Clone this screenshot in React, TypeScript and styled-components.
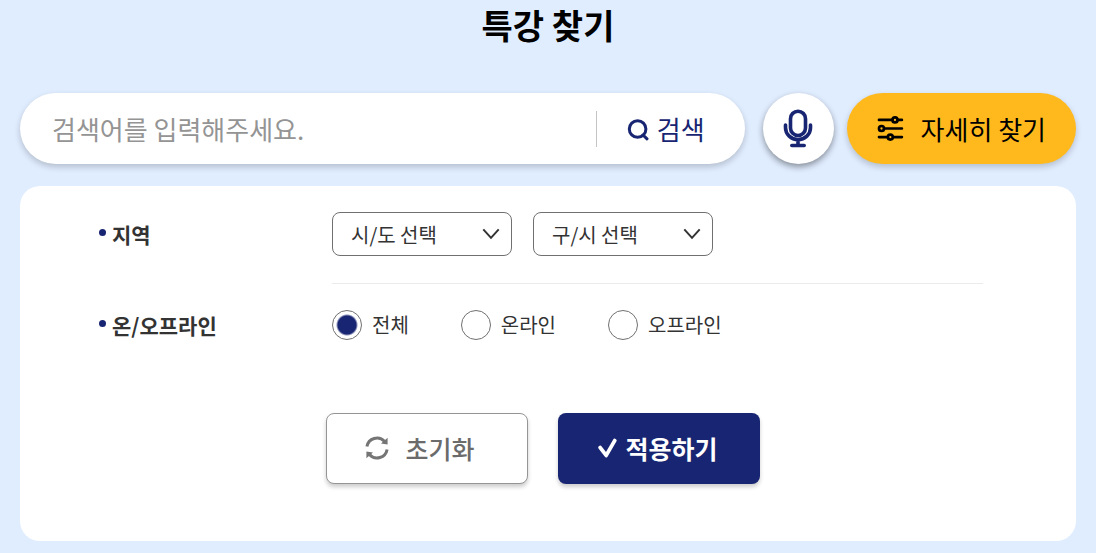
import React from "react";
import styled, { createGlobalStyle } from "styled-components";

const navy = "#182572";

const GlobalStyle = createGlobalStyle`
  *, *::before, *::after { box-sizing: border-box; }
  body {
    margin: 0;
    background: #e0edff;
    color: #333;
    font-family: "Noto Sans CJK KR", "Noto Sans", sans-serif;
  }
  button, input, select { font: inherit; color: inherit; margin: 0; }
  button { cursor: pointer; }
`;

const Page = styled.main`
  padding: 0 20px 12px;
`;

const Title = styled.h1`
  margin: 0;
  padding: 0 0 43px;
  color: #000;
  font-size: 34px;
  font-weight: 700;
  line-height: 50px;
  text-align: center;
`;

const SearchRow = styled.div`
  display: flex;
  align-items: center;
  height: 71px;
  margin-bottom: 22px;
`;

const SearchForm = styled.form`
  display: flex;
  align-items: center;
  flex: 1;
  min-width: 0;
  height: 100%;
  border-radius: 36px;
  background: #fff;
  box-shadow: 0 3px 6px rgba(0, 0, 0, 0.2);
`;

const SearchInput = styled.input`
  flex: 1;
  min-width: 0;
  height: 60px;
  padding: 0 32px;
  border: 0;
  outline: 0;
  background: transparent;
  font-size: 26px;
  &::placeholder { color: #949494; opacity: 1; }
`;

const SearchButton = styled.button`
  display: flex;
  align-items: center;
  gap: 8px;
  height: 36px;
  padding: 0 40px 0 30px;
  border: 0;
  border-left: 1px solid #c4c4c4;
  background: transparent;
  color: ${navy};
  font-size: 26px;
  line-height: 36px;
`;

const MicButton = styled.button`
  display: flex;
  align-items: center;
  justify-content: center;
  width: 71px;
  height: 71px;
  margin: 0 13px 0 18px;
  padding: 0;
  border: 0;
  border-radius: 50%;
  background: #fff;
  color: ${navy};
  box-shadow: 0 3px 6px rgba(0, 0, 0, 0.4);
`;

const DetailButton = styled.button`
  display: flex;
  align-items: center;
  gap: 16px;
  height: 71px;
  padding: 0 30px;
  border: 0;
  border-radius: 36px;
  background: #ffb91d;
  color: #000;
  font-size: 26px;
  box-shadow: 0 3px 6px rgba(0, 0, 0, 0.2);
`;

const Panel = styled.form`
  padding: 0 93px 57px 79px;
  border-radius: 20px;
  background: #fff;
`;

const FilterRow = styled.div`
  display: flex;
  align-items: center;
`;

const FilterName = styled.div`
  display: flex;
  align-items: center;
  gap: 6px;
  width: 233px;
  padding-bottom: 2px;
  font-size: 21px;
  font-weight: 700;
  line-height: 30px;
  &::before {
    content: "";
    width: 7px;
    height: 7px;
    margin-bottom: 2px;
    border-radius: 50%;
    background: ${navy};
  }
`;

const Fields = styled.div<{ $gap: number }>`
  display: flex;
  flex: 1;
  gap: ${(p) => p.$gap}px;
  padding: 26px 0 27px;
`;

const Rule = styled.hr`
  height: 1px;
  margin: 0 0 0 233px;
  border: 0;
  background: #ebebeb;
`;

const SelectBox = styled.div`
  display: grid;
  align-items: center;
  width: 180px;
  > * { grid-area: 1 / 1; }
  > svg { justify-self: end; margin-right: 12px; pointer-events: none; }
`;

const Select = styled.select`
  appearance: none;
  width: 100%;
  height: 44px;
  padding: 0 40px 0 18px;
  border: 1px solid #707070;
  border-radius: 8px;
  background: #fff;
  font-size: 20px;
`;

const RadioLabel = styled.label`
  display: flex;
  align-items: center;
  gap: 10px;
  font-size: 20px;
  line-height: 30px;
`;

const Radio = styled.input`
  appearance: none;
  width: 30px;
  height: 30px;
  border: 1px solid #707070;
  border-radius: 50%;
  background: #fff;
  &:checked { background: radial-gradient(circle, ${navy} 9px, #fff 11px); }
`;

const Actions = styled.div`
  display: flex;
  justify-content: center;
  gap: 30px;
  padding: 46px 0 0 4px;
`;

const ActionButton = styled.button<{ $primary?: boolean }>`
  display: flex;
  align-items: center;
  justify-content: center;
  gap: ${(p) => (p.$primary ? 8 : 16)}px;
  width: 202px;
  height: 71px;
  padding: 0 ${(p) => (p.$primary ? 2 : 14)}px 2px 0;
  border: ${(p) => (p.$primary ? "0" : "1px solid #959595")};
  border-radius: 8px;
  background: ${(p) => (p.$primary ? navy : "#fff")};
  color: ${(p) => (p.$primary ? "#fff" : "#6b6b6b")};
  font-size: 25px;
  font-weight: ${(p) => (p.$primary ? 700 : 500)};
  box-shadow: 0 3px 4px rgba(0, 0, 0, 0.2);
`;

const SearchIcon = () => (
  <svg width="22" height="24" viewBox="0 0 22 24" fill="none" stroke="currentColor" strokeWidth="3" aria-hidden="true">
    <circle cx="10.6" cy="12" r="8.3" />
    <path d="M16 18l4 3.8" strokeLinecap="round" />
  </svg>
);

const MicIcon = () => (
  <svg width="30" height="40" viewBox="0 0 30 40" fill="none" stroke="currentColor" strokeWidth="3.6" strokeLinecap="round" aria-hidden="true">
    <rect x="7.5" y="2.2" width="15" height="24.3" rx="7.5" />
    <path d="M2.5 16v2.8a12.5 11.8 0 0 0 25 0v-2.8M15 31v5.5M8.8 36.5h12.4" />
  </svg>
);

const SlidersIcon = () => (
  <svg width="28" height="26" viewBox="0 0 28 26" fill="none" stroke="currentColor" strokeWidth="2.7" strokeLinecap="round" aria-hidden="true">
    <path d="M2 3.9h13M21 3.9h3.9M7.4 12.5h17.5M2 21.1h9M16.6 21.1h8.3" />
    <circle cx="18" cy="3.9" r="2.5" />
    <circle cx="4.5" cy="12.5" r="2.5" />
    <circle cx="13.3" cy="21.1" r="2.5" />
  </svg>
);

const ChevronIcon = () => (
  <svg width="18" height="12" viewBox="0 0 18 12" fill="none" stroke="#333" strokeWidth="2" aria-hidden="true">
    <path d="M1.3 1.3L9 9.8l7.7-8.5" />
  </svg>
);

const ResetIcon = () => (
  <svg width="24" height="24" viewBox="0 0 24 24" fill="none" stroke="#757575" strokeWidth="3" aria-hidden="true">
    <path d="M1.9 10.6A10.3 10.3 0 0 1 19.6 5.4M22.1 13.4A10.3 10.3 0 0 1 4.4 18.6" />
    <path d="M22.6 1.8v6.6l-6.6-.9zM1.4 22.2v-6.6l6.6.9z" fill="#757575" stroke="none" />
  </svg>
);

const CheckIcon = () => (
  <svg width="19" height="20" viewBox="0 0 19 20" fill="none" stroke="currentColor" strokeWidth="3.8" strokeLinecap="round" strokeLinejoin="round" aria-hidden="true">
    <path d="M2.2 9.6l6 7.8L16.7 2.6" />
  </svg>
);

const regions = ["시/도 선택", "구/시 선택"];
const modes = ["전체", "온라인", "오프라인"];

export default function App() {
  return (
    <>
      <GlobalStyle />
      <Page>
        <Title>특강 찾기</Title>
        <SearchRow>
          <SearchForm role="search" onSubmit={(e) => e.preventDefault()}>
            <SearchInput type="text" aria-label="검색어" placeholder="검색어를 입력해주세요." />
            <SearchButton type="submit">
              <SearchIcon />
              검색
            </SearchButton>
          </SearchForm>
          <MicButton type="button" aria-label="음성 검색">
            <MicIcon />
          </MicButton>
          <DetailButton type="button">
            <SlidersIcon />
            자세히 찾기
          </DetailButton>
        </SearchRow>
        <Panel onSubmit={(e) => e.preventDefault()}>
          <FilterRow role="group" aria-labelledby="region-name">
            <FilterName id="region-name">지역</FilterName>
            <Fields $gap={21}>
              {regions.map((name) => (
                <SelectBox key={name}>
                  <Select aria-label={name}>
                    <option>{name}</option>
                  </Select>
                  <ChevronIcon />
                </SelectBox>
              ))}
            </Fields>
          </FilterRow>
          <Rule />
          <FilterRow role="radiogroup" aria-labelledby="mode-name">
            <FilterName id="mode-name">온/오프라인</FilterName>
            <Fields $gap={52}>
              {modes.map((name, i) => (
                <RadioLabel key={name}>
                  <Radio type="radio" name="mode" defaultChecked={i === 0} />
                  {name}
                </RadioLabel>
              ))}
            </Fields>
          </FilterRow>
          <Actions>
            <ActionButton type="reset">
              <ResetIcon />
              초기화
            </ActionButton>
            <ActionButton type="submit" $primary>
              <CheckIcon />
              적용하기
            </ActionButton>
          </Actions>
        </Panel>
      </Page>
    </>
  );
}
